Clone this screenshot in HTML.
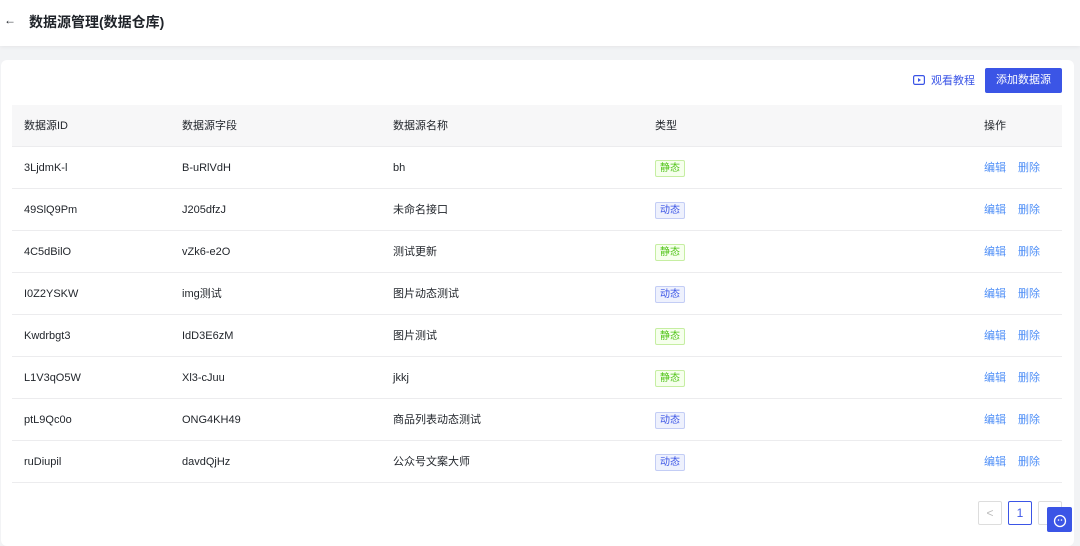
<!DOCTYPE html>
<html><head><meta charset="utf-8"><style>
*{margin:0;padding:0;box-sizing:border-box}
body{width:1080px;height:546px;overflow:hidden;background:#f2f3f5;font-family:"Liberation Sans","Noto Sans CJK SC",sans-serif;color:#1f2329;position:relative}
.hdr{position:absolute;left:0;top:0;width:1080px;height:46px;background:#fff;box-shadow:0 1px 4px rgba(0,0,0,.06)}
.hdr .t{position:absolute;left:29px;top:12px;font-size:14px;font-weight:bold}
.hdr .a{position:absolute;left:4px;top:13px;font-size:12px}
.card{position:absolute;left:1px;top:60px;width:1073px;height:486px;background:#fff;border-radius:6px}
.btn{position:absolute;left:985px;top:68px;width:77px;height:25px;background:#3b55e6;color:#fff;font-size:11px;text-align:center;line-height:25px;border-radius:2px}
.watch{position:absolute;left:913px;top:73px;font-size:11px;color:#3b55e6;line-height:16px}
.th{position:absolute;left:12px;top:105px;width:1050px;height:42px;background:#f7f7f8;border-bottom:1px solid #ececee}
.row{position:absolute;left:12px;width:1050px;height:42px;border-bottom:1px solid #ececee}
.c{position:absolute;top:0;line-height:42px;font-size:11px}
.th .c{font-size:11px;color:#1f2329}
.tag{position:absolute;left:643px;top:13px;width:30px;height:17px;font-size:10px;line-height:15px;text-align:center;border-radius:2px}
.s{color:#52c41a;border:1px solid #c6eea2;background:#f6ffed}
.d{color:#3b55e6;border:1px solid #c3cdf5;background:#eef1fd}
.op{position:absolute;left:972px;top:0;line-height:42px;font-size:11px;color:#4f8ff7;word-spacing:0}
.op b{font-weight:normal;margin-left:12px}
.pg{position:absolute;top:501px;width:24px;height:24px;border:1px solid #ddd;border-radius:2px;text-align:center;line-height:22px;font-size:12px;color:#bbb}
</style></head><body>
<div class="hdr"><span class="a">←</span><span class="t">数据源管理(数据仓库)</span></div>
<div class="card"></div>
<div class="watch"><svg width="12" height="10" viewBox="0 0 12 10" style="vertical-align:-1px;margin-right:6px"><rect x="0.6" y="0.6" width="10.8" height="8.8" rx="1.5" fill="none" stroke="#3b55e6" stroke-width="1.2"/><path d="M5 3v4l3-2z" fill="#3b55e6"/></svg>观看教程</div>
<div class="btn">添加数据源</div>
<div class="th"><span class="c" style="left:12px">数据源ID</span><span class="c" style="left:170px">数据源字段</span><span class="c" style="left:381px">数据源名称</span><span class="c" style="left:643px">类型</span><span class="c" style="left:972px">操作</span></div>
<div class="row" style="top:147px"><span class="c" style="left:12px">3LjdmK-l</span><span class="c" style="left:170px">B-uRlVdH</span><span class="c" style="left:381px">bh</span><span class="tag s">静态</span><span class="op">编辑<b>删除</b></span></div>
<div class="row" style="top:189px"><span class="c" style="left:12px">49SlQ9Pm</span><span class="c" style="left:170px">J205dfzJ</span><span class="c" style="left:381px">未命名接口</span><span class="tag d">动态</span><span class="op">编辑<b>删除</b></span></div>
<div class="row" style="top:231px"><span class="c" style="left:12px">4C5dBilO</span><span class="c" style="left:170px">vZk6-e2O</span><span class="c" style="left:381px">测试更新</span><span class="tag s">静态</span><span class="op">编辑<b>删除</b></span></div>
<div class="row" style="top:273px"><span class="c" style="left:12px">I0Z2YSKW</span><span class="c" style="left:170px">img测试</span><span class="c" style="left:381px">图片动态测试</span><span class="tag d">动态</span><span class="op">编辑<b>删除</b></span></div>
<div class="row" style="top:315px"><span class="c" style="left:12px">Kwdrbgt3</span><span class="c" style="left:170px">IdD3E6zM</span><span class="c" style="left:381px">图片测试</span><span class="tag s">静态</span><span class="op">编辑<b>删除</b></span></div>
<div class="row" style="top:357px"><span class="c" style="left:12px">L1V3qO5W</span><span class="c" style="left:170px">Xl3-cJuu</span><span class="c" style="left:381px">jkkj</span><span class="tag s">静态</span><span class="op">编辑<b>删除</b></span></div>
<div class="row" style="top:399px"><span class="c" style="left:12px">ptL9Qc0o</span><span class="c" style="left:170px">ONG4KH49</span><span class="c" style="left:381px">商品列表动态测试</span><span class="tag d">动态</span><span class="op">编辑<b>删除</b></span></div>
<div class="row" style="top:441px"><span class="c" style="left:12px">ruDiupil</span><span class="c" style="left:170px">davdQjHz</span><span class="c" style="left:381px">公众号文案大师</span><span class="tag d">动态</span><span class="op">编辑<b>删除</b></span></div>
<div class="pg" style="left:978px">&lt;</div>
<div class="pg" style="left:1008px;border-color:#3b55e6;color:#3b55e6">1</div>
<div class="pg" style="left:1038px"></div>
<div style="position:absolute;left:1047px;top:507px;width:25px;height:25px;background:#3b55e6;border-radius:2px"><svg width="25" height="25" viewBox="0 0 25 25"><circle cx="13" cy="14" r="5.5" fill="none" stroke="#fff" stroke-width="1.3"/><circle cx="11.5" cy="13" r=".8" fill="#fff"/><circle cx="14.5" cy="13" r=".8" fill="#fff"/></svg></div>
</body></html>
